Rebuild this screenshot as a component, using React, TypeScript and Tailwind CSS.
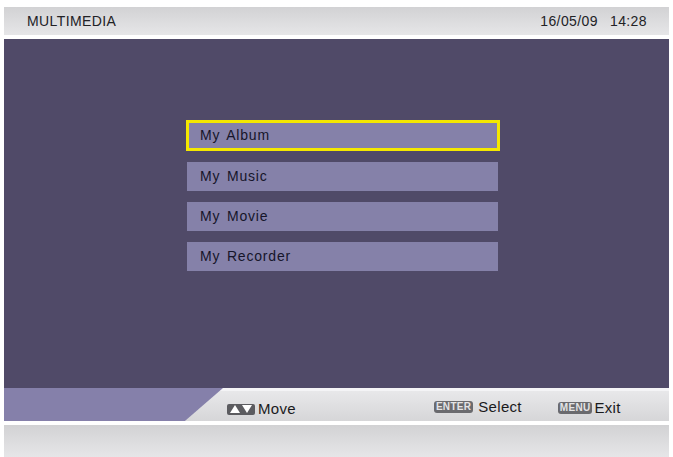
const menuItems = ["My Album", "My Music", "My Movie", "My Recorder"];

function KeyIcon({ label }: { label: string }) {
  return (
    <span className="flex h-[12px] items-center rounded-[3px] bg-[#6a6a6e] px-[2px] text-[10px] font-bold leading-none tracking-[0.3px] text-[#e4e4e6]">
      {label}
    </span>
  );
}

function ArrowsIcon() {
  return (
    <span className="flex h-[11px] w-[28px] items-center justify-center gap-[2px] rounded-[2px] bg-[#5c5c60]">
      <svg width="10" height="8" viewBox="0 0 10 8" aria-hidden="true">
        <path d="M5 0 L10 8 L0 8 Z" fill="#ffffff" />
      </svg>
      <svg width="10" height="8" viewBox="0 0 10 8" aria-hidden="true">
        <path d="M0 0 L10 0 L5 8 Z" fill="#ffffff" />
      </svg>
    </span>
  );
}

export default function App() {
  const selected = 0;

  return (
    <div className="flex h-[457px] w-[673px] flex-col bg-white px-[4px] pt-[7px] font-['Liberation_Sans',Arial,sans-serif] text-[#222226]">
      {/* top status bar */}
      <div className="flex h-[28px] items-center justify-between bg-gradient-to-b from-[#d2d2d4] to-[#e6e6e8] pl-[23px] pr-[22px] text-[14px] tracking-[0.4px]">
        <span>MULTIMEDIA</span>
        <span className="flex gap-[12px]">
          <span>16/05/09</span>
          <span>14:28</span>
        </span>
      </div>

      {/* menu area */}
      <div className="mt-[4px] flex h-[349px] flex-col gap-[11px] bg-[#504a68] pl-[183px] pt-[81px]">
        {menuItems.map((item, i) =>
          i === selected ? (
            <div
              key={item}
              className="-ml-[1px] flex h-[31px] w-[314px] items-center border-[3px] border-[#f4e800] bg-[#8581a9] pl-[11px] text-[14px] tracking-[0.8px] text-[#16152a] [word-spacing:2px]"
            >
              {item}
            </div>
          ) : (
            <div
              key={item}
              className="flex h-[29px] w-[311px] items-center bg-[#8581a9] pl-[13px] text-[14px] tracking-[0.8px] text-[#16152a] [word-spacing:2px]"
            >
              {item}
            </div>
          )
        )}
      </div>

      {/* help bar */}
      <div className="flex h-[33px] items-center border-t-[3px] border-[#f4f4f6] bg-gradient-to-b from-[#e8e8ea] to-[#d6d6d8] text-[15px] tracking-[0.3px] text-[#1a1a1c]">
        <div className="-mt-[3px] h-[33px] w-[219px] self-start bg-[#8580aa] [clip-path:polygon(0_0,100%_0,82.6%_100%,0_100%)]" />
        <div className="ml-[4px] flex items-center gap-[3px] pt-[6px]">
          <ArrowsIcon />
          <span>Move</span>
        </div>
        <div className="ml-[138px] flex items-center gap-[5px] pt-[2px]">
          <KeyIcon label="ENTER" />
          <span>Select</span>
        </div>
        <div className="ml-[36px] flex items-center gap-[2px] pt-[4px]">
          <KeyIcon label="MENU" />
          <span>Exit</span>
        </div>
      </div>

      {/* bottom bar */}
      <div className="mt-[4px] flex-1 bg-gradient-to-b from-[#d2d2d4] to-[#e6e6e8]" />
    </div>
  );
}
